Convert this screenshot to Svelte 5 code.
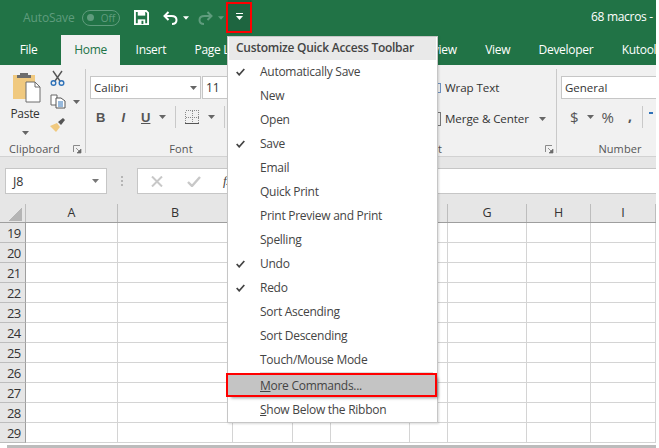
<script>
	const tabs = ['File', 'Home', 'Insert', 'Page Layout', 'Formulas', 'Data', 'Review', 'View', 'Developer', 'Kutools'];
	const columns = [
		{ name: 'A', width: 92 },
		{ name: 'B', width: 115 },
		{ name: 'C', width: 60 },
		{ name: 'D', width: 38 },
		{ name: 'E', width: 79 },
		{ name: 'F', width: 38 },
		{ name: 'G', width: 79 },
		{ name: 'H', width: 64 },
		{ name: 'I', width: 65 }
	];
	const rows = [19, 20, 21, 22, 23, 24, 25, 26, 27, 28, 29];
	const menu = [
		{ label: 'Automatically Save', checked: true },
		{ label: 'New' },
		{ label: 'Open' },
		{ label: 'Save', checked: true },
		{ label: 'Email' },
		{ label: 'Quick Print' },
		{ label: 'Print Preview and Print' },
		{ label: 'Spelling' },
		{ label: 'Undo', checked: true },
		{ label: 'Redo', checked: true },
		{ label: 'Sort Ascending' },
		{ label: 'Sort Descending' },
		{ label: 'Touch/Mouse Mode' }
	];
</script>

{#snippet launcher()}
	<svg class="launcher" width="9" height="9" viewBox="0 0 9 9">
		<path d="M0.5 7V0.5H7" fill="none" stroke="#8a8a8a" />
		<path d="M3 3L7 7M8 4V8H4z" fill="#6a6a6a" stroke="#6a6a6a" stroke-width="0.7" />
	</svg>
{/snippet}

{#snippet caret(color = '#666')}
	<svg class="caret" width="7" height="4" viewBox="0 0 7 4"><path d="M0 0H7L3.5 4z" fill={color} /></svg>
{/snippet}

<div class="window">
	<header class="titlebar">
		<div class="autosave">
			<span>AutoSave</span>
			<span class="toggle"><i></i>Off</span>
		</div>
		<svg class="qat-save" width="15" height="15" viewBox="0 0 16 16">
			<path d="M1 1H13L15 3V15H1z" fill="none" stroke="#fff" stroke-width="2" />
			<rect x="4" y="1" width="8" height="5" fill="#fff" />
			<rect x="4" y="10" width="8" height="5" fill="#fff" />
			<rect x="8" y="11.5" width="2" height="3.5" fill="#217346" />
		</svg>
		<svg class="qat-undo" width="15" height="14" viewBox="0 0 15 14">
			<path d="M5.5 1L1.5 5L5.5 9M2 5H8.5C11.5 5 13.5 6.5 13.5 9C13.5 11.5 11.5 13 9 13" fill="none" stroke="#fff" stroke-width="2" />
		</svg>
		{@render caret('#fff')}
		<svg class="qat-redo" width="15" height="14" viewBox="0 0 15 14">
			<path d="M9.5 1L13.5 5L9.5 9M13 5H6.5C3.5 5 1.5 6.5 1.5 9C1.5 11.5 3.5 13 6 13" fill="none" stroke="#5f9c7d" stroke-width="2" />
		</svg>
		{@render caret('#5f9c7d')}
		<div class="qat-more">
			<svg width="7" height="7" viewBox="0 0 7 7"><path d="M0 0H7V1H0zM0 3H7L3.5 7z" fill="#fff" /></svg>
		</div>
		<span class="doc-title">68 macros -</span>
	</header>

	<nav class="tabs">
		{#each tabs as tab}
			<span class="tab" class:active={tab === 'Home'}>{tab}</span>
		{/each}
	</nav>

	<section class="ribbon">
		<div class="group clipboard">
			<div class="clip-body">
				<div class="paste">
					<svg width="29" height="31" viewBox="0 0 29 31">
						<path d="M1 3H23V27H1z" fill="#f0c97f" />
						<path d="M8 3V1H16V3H19V6H5V3z" fill="#6d6d6d" />
						<path d="M14 10H23L28 15V30H14z" fill="#fff" stroke="#6d6d6d" />
						<path d="M23 10V15H28" fill="none" stroke="#6d6d6d" />
					</svg>
					<span>Paste</span>
					{@render caret()}
				</div>
				<div class="clip-tools">
					<svg width="15" height="16" viewBox="0 0 15 16">
						<path d="M3 1L10 11M12 1L5 11" stroke="#555" stroke-width="1.4" fill="none" />
						<circle cx="3.5" cy="13" r="2.3" fill="none" stroke="#2f72b8" stroke-width="1.4" />
						<circle cx="11.5" cy="13" r="2.3" fill="none" stroke="#2f72b8" stroke-width="1.4" />
					</svg>
					<div class="copy-row">
						<svg width="16" height="15" viewBox="0 0 16 15">
							<path d="M1 1H7V11H1z" fill="#fff" stroke="#666" />
							<path d="M6 4H11L15 7V14H6z" fill="#fff" stroke="#555" />
							<path d="M8 8H13M8 10H13M8 12H13" stroke="#2f72b8" />
						</svg>
						{@render caret()}
					</div>
					<svg width="16" height="15" viewBox="0 0 16 15">
						<path d="M0 9L7 6L10 10L6 15C4 13 2 11 0 9z" fill="#f0c97f" />
						<path d="M8 5L13 1L15 3L11 8z" fill="#555" />
					</svg>
				</div>
			</div>
			<div class="group-label">Clipboard{@render launcher()}</div>
		</div>

		<div class="group font">
			<div class="font-pickers">
				<div class="field family">Calibri{@render caret()}</div>
				<div class="field size">11</div>
			</div>
			<div class="font-tools">
				<b>B</b>
				<i>I</i>
				<u>U</u>
				{@render caret()}
				<span class="rule"></span>
				<svg class="borders" width="14" height="14" viewBox="0 0 14 14" shape-rendering="crispEdges">
					<path d="M0.5 0.5H13.5V13.5H0.5zM7.5 0.5V13.5M0.5 7.5H13.5" fill="none" stroke="#8a8a8a" stroke-dasharray="1 1" />
					<path d="M0 13.5H14" stroke="#555" />
				</svg>
				{@render caret()}
				<span class="rule"></span>
				<span class="fill-hint"></span>
			</div>
			<div class="group-label center">Font</div>
		</div>

		<div class="group alignment">
			<div class="align-row"><span class="wrap-icon"></span>Wrap Text</div>
			<div class="align-row"><span class="merge-icon"></span>Merge &amp; Center{@render caret()}</div>
			<div class="group-label">t{@render launcher()}</div>
		</div>

		<div class="group number">
			<div class="field general">General</div>
			<div class="number-tools">
				<span>$</span>{@render caret()}<span class="percent">%</span><b>,</b><span class="rule"></span>
				<span class="decimal-hint"></span>
			</div>
			<div class="group-label number-label">Number</div>
		</div>
	</section>

	<section class="formula-bar">
		<div class="name-box">J8{@render caret('#777')}</div>
		<span class="grip"></span>
		<div class="formula-input">
			<svg width="12" height="11" viewBox="0 0 12 11"><path d="M1 0.5L11 10.5M11 0.5L1 10.5" stroke="#c8c8c8" stroke-width="2" /></svg>
			<svg width="14" height="11" viewBox="0 0 14 11"><path d="M1 6L5 10L13 1" fill="none" stroke="#c8c8c8" stroke-width="2.4" /></svg>
			<i class="fx">fx</i>
		</div>
	</section>

	<section class="sheet">
		<div class="head">
			<div class="corner"></div>
			{#each columns as col}
				<div class="col-head" style="width: {col.width}px">{col.name}</div>
			{/each}
		</div>
		{#each rows as row}
			<div class="row">
				<div class="row-head">{row}</div>
				{#each columns as col}
					<div class="cell" style="width: {col.width}px"></div>
				{/each}
			</div>
		{/each}
		<div class="scrollbar"></div>
	</section>
</div>

<div class="qat-mark"></div>

<div class="menu">
	<div class="menu-title">Customize Quick Access Toolbar</div>
	{#each menu as item}
		<div class="menu-item">
			<span class="check">
				{#if item.checked}
					<svg width="9" height="8" viewBox="0 0 9 8"><path d="M0.7 4L3.2 6.8L8.3 1" fill="none" stroke="#444" stroke-width="1.7" /></svg>
				{/if}
			</span>{item.label}
		</div>
	{/each}
	<div class="menu-sep"></div>
	<div class="menu-item more"><span class="check"></span><span><u>M</u>ore Commands...</span></div>
	<div class="menu-item"><span class="check"></span><span><u>S</u>how Below the Ribbon</span></div>
</div>

<style>
	:global(body) {
		background: #fff;
		overflow: hidden;
	}
	.window {
		width: 656px;
		height: 448px;
		overflow: hidden;
		font-family: 'Open Sans', 'Liberation Sans', sans-serif;
		font-size: 12px;
		color: #444;
		background: #fff;
	}
	.titlebar {
		display: flex;
		align-items: center;
		height: 35px;
		padding-left: 23px;
		background: #217346;
		color: #fff;
		box-sizing: border-box;
	}
	.autosave {
		display: flex;
		align-items: center;
		gap: 7px;
		width: 111px;
		color: #5f9c7d;
		letter-spacing: -0.1px;
	}
	.toggle {
		display: flex;
		align-items: center;
		gap: 7px;
		box-sizing: border-box;
		width: 38px;
		height: 16px;
		padding-left: 4px;
		border: 1px solid #5f9c7d;
		border-radius: 8px;
		font-size: 10px;
		letter-spacing: 0;
	}
	.toggle i {
		width: 7px;
		height: 7px;
		border-radius: 50%;
		background: #5f9c7d;
	}
	.qat-save {
		margin-right: 14px;
	}
	.titlebar .caret {
		margin-left: 5px;
		width: 6px;
	}
	.qat-redo {
		margin-left: 9px;
	}
	.qat-more {
		display: flex;
		align-items: center;
		justify-content: center;
		width: 22px;
		height: 33px;
		margin: -2px 0 0 4px;
		background: #1e6540;
		box-shadow: 1px 0 2px rgba(0, 0, 0, 0.3);
	}
	.qat-more svg {
		display: block;
		margin-top: -1px;
	}
	.doc-title {
		width: 65px;
		margin: -3px 0 0 auto;
		white-space: nowrap;
		letter-spacing: -0.3px;
	}
	.tabs {
		display: flex;
		align-items: stretch;
		height: 30px;
		padding-left: 5.5px;
		background: #217346;
		color: #fff;
		white-space: nowrap;
		overflow: hidden;
	}
	.tab {
		padding: 6px 14.2px 0;
		box-sizing: border-box;
		font-size: 12px;
		letter-spacing: -0.3px;
	}
	.tab.active {
		margin: 0 1px 0 9px;
		padding: 6px 13.5px 0;
		background: #f1f1f1;
		color: #217346;
	}
	.ribbon {
		display: flex;
		box-sizing: border-box;
		height: 92px;
		padding-top: 4px;
		background: #f1f1f1;
		border-bottom: 1px solid #d2d2d2;
		overflow: hidden;
	}
	.group {
		position: relative;
		display: flex;
		flex-direction: column;
		box-sizing: border-box;
		height: 84px;
		border-right: 1px solid #c9c9c9;
		flex: none;
	}
	.group-label {
		display: flex;
		justify-content: space-between;
		align-items: center;
		margin: auto 0 -3px;
		color: #555;
		font-size: 11px;
		line-height: 14px;
		letter-spacing: 0.1px;
	}
	.group-label.center {
		justify-content: center;
	}
	.launcher,
	.caret {
		flex: none;
	}
	.clipboard {
		width: 86px;
		padding: 0 3px 0 9px;
	}
	.clip-body {
		display: flex;
		gap: 8px;
		padding-top: 3px;
	}
	.paste {
		display: flex;
		flex-direction: column;
		align-items: center;
		width: 32px;
		gap: 2px;
		color: #333;
		letter-spacing: -0.3px;
	}
	.paste svg:first-child {
		margin-left: 3px;
	}
	.paste span {
		margin-top: 1px;
		line-height: 16px;
	}
	.paste .caret {
		margin-top: 7px;
	}
	.clip-tools {
		display: flex;
		flex-direction: column;
		gap: 8px;
		margin: -2px 0 0 1px;
	}
	.copy-row {
		display: flex;
		align-items: center;
		gap: 7px;
	}
	.font {
		width: 200px;
		padding: 7px 14px 0 4px;
		border-right: none;
	}
	.font-pickers {
		display: flex;
		gap: 1px;
	}
	.field {
		display: flex;
		align-items: center;
		flex: none;
		box-sizing: border-box;
		height: 23px;
		padding: 0 3px;
		background: #fff;
		border: 1px solid #c6c6c6;
		color: #333;
		font-size: 11.5px;
	}
	.family {
		justify-content: space-between;
		width: 111px;
	}
	.size {
		width: 60px;
		font-size: 12px;
	}
	.font-tools {
		display: flex;
		align-items: center;
		height: 22px;
		margin-top: 7px;
		padding-left: 6px;
		color: #555;
		font-size: 13px;
		white-space: nowrap;
	}
	.font-tools i,
	.font-tools u {
		margin-left: 16px;
		font-family: 'Liberation Sans', sans-serif;
		font-weight: 700;
	}
	.font-tools b {
		font-family: 'Liberation Sans', sans-serif;
	}
	.font-tools .caret {
		margin-left: 9px;
	}
	.font-tools .borders {
		flex: none;
		margin-left: 9px;
	}
	.rule {
		flex: none;
		width: 1px;
		height: 22px;
		margin-left: 9px;
		background: #c9c9c9;
	}
	.fill-hint {
		flex: none;
		width: 3px;
		height: 7px;
		margin-left: 7px;
		border: 1px dotted #777;
	}
	.alignment {
		width: 271px;
		padding: 7px 2px 0 152px;
	}
	.align-row {
		display: flex;
		align-items: center;
		height: 23px;
		margin: 0 0 8px 7px;
		color: #333;
		font-size: 11.6px;
		letter-spacing: -0.1px;
		white-space: nowrap;
	}
	.align-row .caret {
		margin-left: 10px;
	}
	.wrap-icon,
	.merge-icon {
		flex: none;
		width: 3px;
		height: 8px;
		margin: 0 4px 0 -8px;
		border: 1px solid #6f93c2;
		border-left: none;
	}
	.merge-icon {
		height: 12px;
		border-color: #777;
	}
	.number {
		width: 122px;
		padding: 7px 0 0 4px;
		border-right: none;
	}
	.general {
		width: 120px;
	}
	.number-tools {
		display: flex;
		align-items: center;
		height: 22px;
		margin-top: 7px;
		padding-left: 9px;
		color: #555;
		font-size: 15px;
	}
	.number-tools .caret {
		margin: 0 8px 0 8px;
	}
	.number-tools b {
		margin: -4px 0 0 14px;
		font-size: 14px;
	}
	.number-tools .rule {
		margin-left: 10px;
	}
	.decimal-hint {
		flex: none;
		width: 4px;
		height: 2px;
		margin: -8px 0 0 6px;
		background: #2f72b8;
	}
	.number-label {
		justify-content: center;
	}
	.formula-bar {
		display: flex;
		align-items: center;
		height: 48px;
		box-sizing: border-box;
		padding-left: 5px;
		background: #e6e6e6;
	}
	.name-box {
		display: flex;
		justify-content: space-between;
		align-items: center;
		box-sizing: border-box;
		width: 102px;
		height: 26px;
		padding: 0 7px;
		background: #fff;
		border: 1px solid #c6c6c6;
		color: #333;
		font-size: 12.5px;
	}
	.grip {
		width: 2px;
		height: 10px;
		margin: 0 14px;
		background: repeating-linear-gradient(#b5b5b5 0 2px, transparent 2px 4px);
	}
	.formula-input {
		display: flex;
		align-items: center;
		flex: 1;
		gap: 24px;
		height: 26px;
		box-sizing: border-box;
		padding-left: 13px;
		background: #fff;
		border: 1px solid #c6c6c6;
		border-right: none;
	}
	.fx {
		margin-left: -2px;
		font-family: 'Liberation Serif', serif;
		font-size: 13px;
		color: #444;
	}
	.sheet {
		position: relative;
		color: #333;
		font-size: 12.5px;
	}
	.head {
		display: flex;
		height: 18px;
		margin-top: -1px;
		background: #e6e6e6;
		border-bottom: 1px solid #9e9e9e;
	}
	.corner {
		flex: none;
		box-sizing: border-box;
		width: 26px;
		border-right: 1px solid #bdbdbd;
		background: linear-gradient(135deg, transparent 50%, #b5b5b5 50%) no-repeat 9px 4px / 13px 13px;
	}
	.col-head {
		flex: none;
		box-sizing: border-box;
		text-align: center;
		line-height: 18px;
		border-right: 1px solid #bdbdbd;
	}
	.row {
		display: flex;
		height: 20px;
	}
	.row-head {
		flex: none;
		box-sizing: border-box;
		width: 26px;
		padding-left: 7px;
		background: #e6e6e6;
		border-right: 1px solid #9e9e9e;
		border-bottom: 1px solid #bdbdbd;
		font-size: 13px;
		letter-spacing: -0.8px;
		line-height: 21px;
	}
	.cell {
		flex: none;
		box-sizing: border-box;
		border-right: 1px solid #d4d4d4;
		border-bottom: 1px solid #d4d4d4;
	}
	.scrollbar {
		position: absolute;
		left: 7px;
		right: 0;
		top: 241px;
		height: 5px;
		background: #bcbcbc;
	}
	.qat-mark {
		position: absolute;
		left: 226px;
		top: 2px;
		width: 26px;
		height: 31px;
		box-sizing: border-box;
		border: 2px solid #f00;
	}
	.menu {
		position: absolute;
		left: 227px;
		top: 36px;
		width: 211px;
		height: 387px;
		box-sizing: border-box;
		background: #fff;
		border: 1px solid #c6c6c6;
		box-shadow: 1px 1px 2px rgba(0, 0, 0, 0.15);
		font-family: 'Open Sans', 'Liberation Sans', sans-serif;
		font-size: 12px;
		letter-spacing: -0.27px;
		color: #444;
	}
	.menu-title {
		height: 23px;
		margin: 0 1px;
		padding-left: 7px;
		background: #e9e9e9;
		font-weight: 600;
		line-height: 22px;
		white-space: nowrap;
	}
	.menu-item {
		display: flex;
		align-items: center;
		height: 24px;
		padding-bottom: 1px;
		box-sizing: border-box;
		white-space: nowrap;
	}
	.check {
		display: flex;
		align-items: center;
		flex: none;
		box-sizing: border-box;
		width: 32px;
		padding-left: 8px;
	}
	.menu-sep {
		height: 1px;
		margin: 0 4px 0 32px;
		background: #dcdcdc;
	}
	.more {
		height: 20px;
		margin: 2px 2px 3px 0;
		padding-bottom: 0;
		background: #c4c4c4;
		outline: 2px solid #f00;
		outline-offset: 0;
		box-shadow: 3px 3px 3px rgba(0, 0, 0, 0.4);
	}
</style>
